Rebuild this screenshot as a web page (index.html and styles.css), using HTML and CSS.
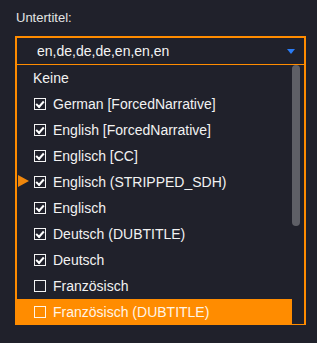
FILE: index.html
```html
<!DOCTYPE html>
<html>
<head>
<meta charset="utf-8">
<link rel="stylesheet" href="styles.css">
</head>
<body>
<div class="field">
  <div class="label">Untertitel:</div>
  <div class="select">
    <div class="select-head">
      <span class="value">en,de,de,de,en,en,en</span>
      <svg class="caret" width="8" height="5" viewBox="0 0 8 5"><path d="M0 0H8L4 5Z" fill="#2a7cf6"/></svg>
    </div>
    <div class="list">
      <ul class="items">
        <li class="item"><span class="text">Keine</span></li>
        <li class="item"><span class="cb on"></span><span class="text">German [ForcedNarrative]</span></li>
        <li class="item"><span class="cb on"></span><span class="text">English [ForcedNarrative]</span></li>
        <li class="item"><span class="cb on"></span><span class="text">Englisch [CC]</span></li>
        <li class="item current"><span class="marker"></span><span class="cb on"></span><span class="text">Englisch (STRIPPED_SDH)</span></li>
        <li class="item"><span class="cb on"></span><span class="text">Englisch</span></li>
        <li class="item"><span class="cb on"></span><span class="text">Deutsch (DUBTITLE)</span></li>
        <li class="item"><span class="cb on"></span><span class="text">Deutsch</span></li>
        <li class="item"><span class="cb"></span><span class="text">Französisch</span></li>
        <li class="item hover"><span class="cb"></span><span class="text">Französisch (DUBTITLE)</span></li>
      </ul>
      <div class="scrolltrack"><div class="thumb"></div></div>
    </div>
  </div>
</div>
</body>
</html>
```
FILE: styles.css
```css
html, body {
  margin: 0;
  padding: 0;
  background: #20212b;
}
body {
  width: 317px;
  height: 343px;
  overflow: hidden;
  font-family: "Liberation Sans", Arial, sans-serif;
  font-size: 13px;
  color: #f2f2f2;
}
.field {
  padding: 10px 0 0 15px;
}
.label {
  height: 16px;
  line-height: 16px;
  padding-left: 1px;
  color: #e4e4e4;
}
.select {
  margin-top: 10px;
  width: 287px;
  border: 2px solid #ff8c00;
  border-bottom-width: 1px;
}
.select-head {
  height: 26px;
  border-bottom: 1px solid #ff8c00;
  display: flex;
  align-items: center;
  padding: 0 9px 0 20px;
}
.value {
  flex: 1;
  font-size: 14px;
  color: #f4f4f4;
}
.caret {
  display: block;
}
.list {
  display: flex;
  height: 259px;
  overflow: hidden;
}
.items {
  list-style: none;
  margin: 0;
  padding: 0;
  width: 275px;
}
.item {
  position: relative;
  height: 26px;
  display: flex;
  align-items: center;
  padding-left: 17px;
  gap: 7px;
  white-space: nowrap;
  font-size: 14px;
}
.item .text {
  line-height: 16px;
}
.item:first-child {
  padding-left: 16px;
}
.item.hover {
  background: #ff8c00;
  color: #fff4e6;
}
.cb {
  width: 10px;
  height: 10px;
  border: 1px solid #f4f4f4;
  flex: none;
  position: relative;
}
.cb.on::after {
  content: "";
  position: absolute;
  left: 2px;
  top: 0px;
  width: 6px;
  height: 3px;
  border-left: 2px solid #ffffff;
  border-bottom: 2px solid #ffffff;
  transform: translate(-1px, 2px) rotate(-48deg);
  transform-origin: center;
}
.item.hover .cb {
  border-color: #fff4e6;
}
.marker {
  position: absolute;
  left: 1px;
  top: 6px;
  width: 0;
  height: 0;
  border-top: 6px solid transparent;
  border-bottom: 6px solid transparent;
  border-left: 11px solid #f0870c;
}
.scrolltrack {
  width: 12px;
  flex: none;
}
.thumb {
  width: 8px;
  height: 161px;
  background: #5e5f66;
  border-radius: 4px;
}
```
